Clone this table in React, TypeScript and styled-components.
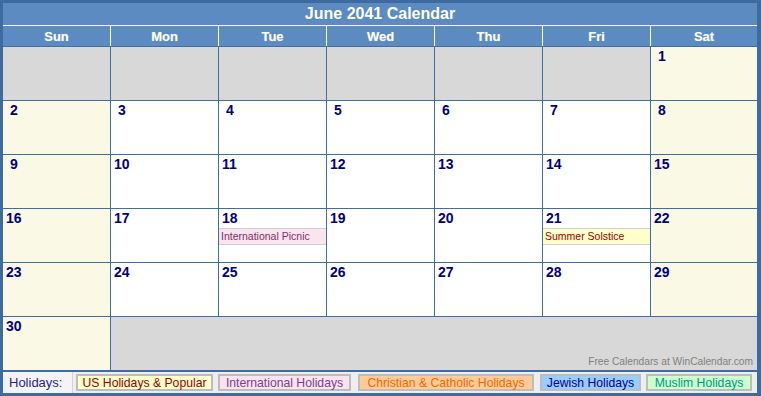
import React from "react";
import styled, { createGlobalStyle } from "styled-components";

const Global = createGlobalStyle`
  html, body { margin: 0; padding: 0; background: #ffffff; }
  * { box-sizing: border-box; }
`;

const LINE = "#3f6ea3";
const HEAD = "#5b8bc0";

const Frame = styled.div`
  width: 761px;
  height: 396px;
  border-style: solid;
  border-color: #3e6b9f;
  border-width: 3px 4px 3px 3px;
  background: ${LINE};
  display: flex;
  flex-direction: column;
  font-family: "Liberation Sans", Arial, sans-serif;
`;

const Title = styled.div`
  height: 23px;
  flex: none;
  background: ${HEAD};
  color: #ffffff;
  font-weight: bold;
  font-size: 16px;
  display: flex;
  align-items: center;
  justify-content: center;
  border-bottom: 1px solid #ffffff;
`;

const HeadRow = styled.div`
  display: grid;
  flex: none;
  grid-template-columns: repeat(6, 107px) 106px;
  column-gap: 1px;
  background: #ffffff;
  height: 20px;
`;

const HeadCell = styled.div`
  background: ${HEAD};
  color: #ffffff;
  font-weight: bold;
  font-size: 13px;
  display: flex;
  align-items: center;
  justify-content: center;
  text-shadow: 0 0 1px rgba(200, 220, 255, 0.6);
`;

const Body = styled.div`
  display: grid;
  flex: none;
  grid-template-columns: repeat(6, 107px) 106px;
  grid-auto-rows: 53px;
  gap: 1px;
  padding-top: 1px;
  background: ${LINE};
`;

type Kind = "blank" | "weekend" | "day";

const Cell = styled.div<{ $kind: Kind; $span?: number }>`
  background: ${(p) =>
    p.$kind === "blank" ? "#d8d8d8" : p.$kind === "weekend" ? "#faf9e5" : "#ffffff"};
  grid-column: ${(p) => (p.$span ? `span ${p.$span}` : "auto")};
  display: flex;
  flex-direction: column;
`;

const DayNum = styled.div<{ $single: boolean }>`
  color: #000080;
  font-weight: bold;
  font-size: 14px;
  line-height: 16px;
  padding: 1px 0 0 ${(p) => (p.$single ? 7 : 3)}px;
`;

const Event = styled.div<{ $bg: string; $fg: string }>`
  margin-top: 2px;
  height: 17px;
  background: ${(p) => p.$bg};
  color: ${(p) => p.$fg};
  border-top: 1px solid #cfcfcf;
  border-bottom: 1px solid #cfcfcf;
  font-size: 10.5px;
  line-height: 15px;
  padding-left: 2px;
  white-space: nowrap;
  overflow: hidden;
`;

const Credit = styled.div`
  margin-top: auto;
  align-self: flex-end;
  color: #808080;
  font-size: 10.2px;
  padding: 0 4px 3px 0;
`;

const Legend = styled.div`
  margin-top: 1px;
  flex: none;
  border-top: 1px solid #3e6b9f;
  height: 22px;
  background: #eeeeee;
  display: flex;
  align-items: center;
  font-size: 12.2px;
`;

const LegendLabel = styled.div`
  width: 70px;
  height: 100%;
  display: flex;
  align-items: center;
  padding-left: 6px;
  color: #1f1f99;
  font-size: 13px;
  border-right: 1px solid #d4d4d4;
  background: #f4f4f4;
`;

const Tag = styled.div<{ $bg: string; $fg: string; $gap: number; $w: number }>`
  margin-left: ${(p) => p.$gap}px;
  width: ${(p) => p.$w}px;
  height: 17px;
  display: flex;
  align-items: center;
  justify-content: center;
  border: 2px solid #bdbdbd;
  background: ${(p) => p.$bg};
  color: ${(p) => p.$fg};
  white-space: nowrap;
`;

type Ev = { label: string; bg: string; fg: string };

const events: Record<number, Ev> = {
  18: { label: "International Picnic", bg: "#f9e4ef", fg: "#7f2f68" },
  21: { label: "Summer Solstice", bg: "#ffffcc", fg: "#990000" },
};

const days = ["Sun", "Mon", "Tue", "Wed", "Thu", "Fri", "Sat"];

export default function App() {
  const cells: React.ReactNode[] = [];
  for (let i = 0; i < 6; i++) cells.push(<Cell key={`b${i}`} $kind="blank" />);
  for (let d = 1; d <= 30; d++) {
    const col = (d + 5) % 7;
    const weekend = col === 0 || col === 6;
    const ev = events[d];
    cells.push(
      <Cell key={d} $kind={weekend ? "weekend" : "day"}>
        <DayNum $single={d < 10}>{d}</DayNum>
        {ev && (
          <Event $bg={ev.bg} $fg={ev.fg}>
            {ev.label}
          </Event>
        )}
      </Cell>
    );
  }
  cells.push(
    <Cell key="tail" $kind="blank" $span={6}>
      <Credit>Free Calendars at WinCalendar.com</Credit>
    </Cell>
  );

  return (
    <>
      <Global />
      <Frame>
        <Title>June 2041 Calendar</Title>
        <HeadRow>
          {days.map((d) => (
            <HeadCell key={d}>{d}</HeadCell>
          ))}
        </HeadRow>
        <Body>{cells}</Body>
        <Legend>
          <LegendLabel>Holidays:</LegendLabel>
          <Tag $bg="#ffffcc" $fg="#990000" $gap={3} $w={137}>US Holidays &amp; Popular</Tag>
          <Tag $bg="#f9e3f0" $fg="#7d3f86" $gap={5} $w={133}>International Holidays</Tag>
          <Tag $bg="#ffcc99" $fg="#ee6b00" $gap={7} $w={176}>Christian &amp; Catholic Holidays</Tag>
          <Tag $bg="#99ccff" $fg="#000099" $gap={6} $w={101}>Jewish Holidays</Tag>
          <Tag $bg="#ccffcc" $fg="#009a8a" $gap={5} $w={106}>Muslim Holidays</Tag>
        </Legend>
      </Frame>
    </>
  );
}
